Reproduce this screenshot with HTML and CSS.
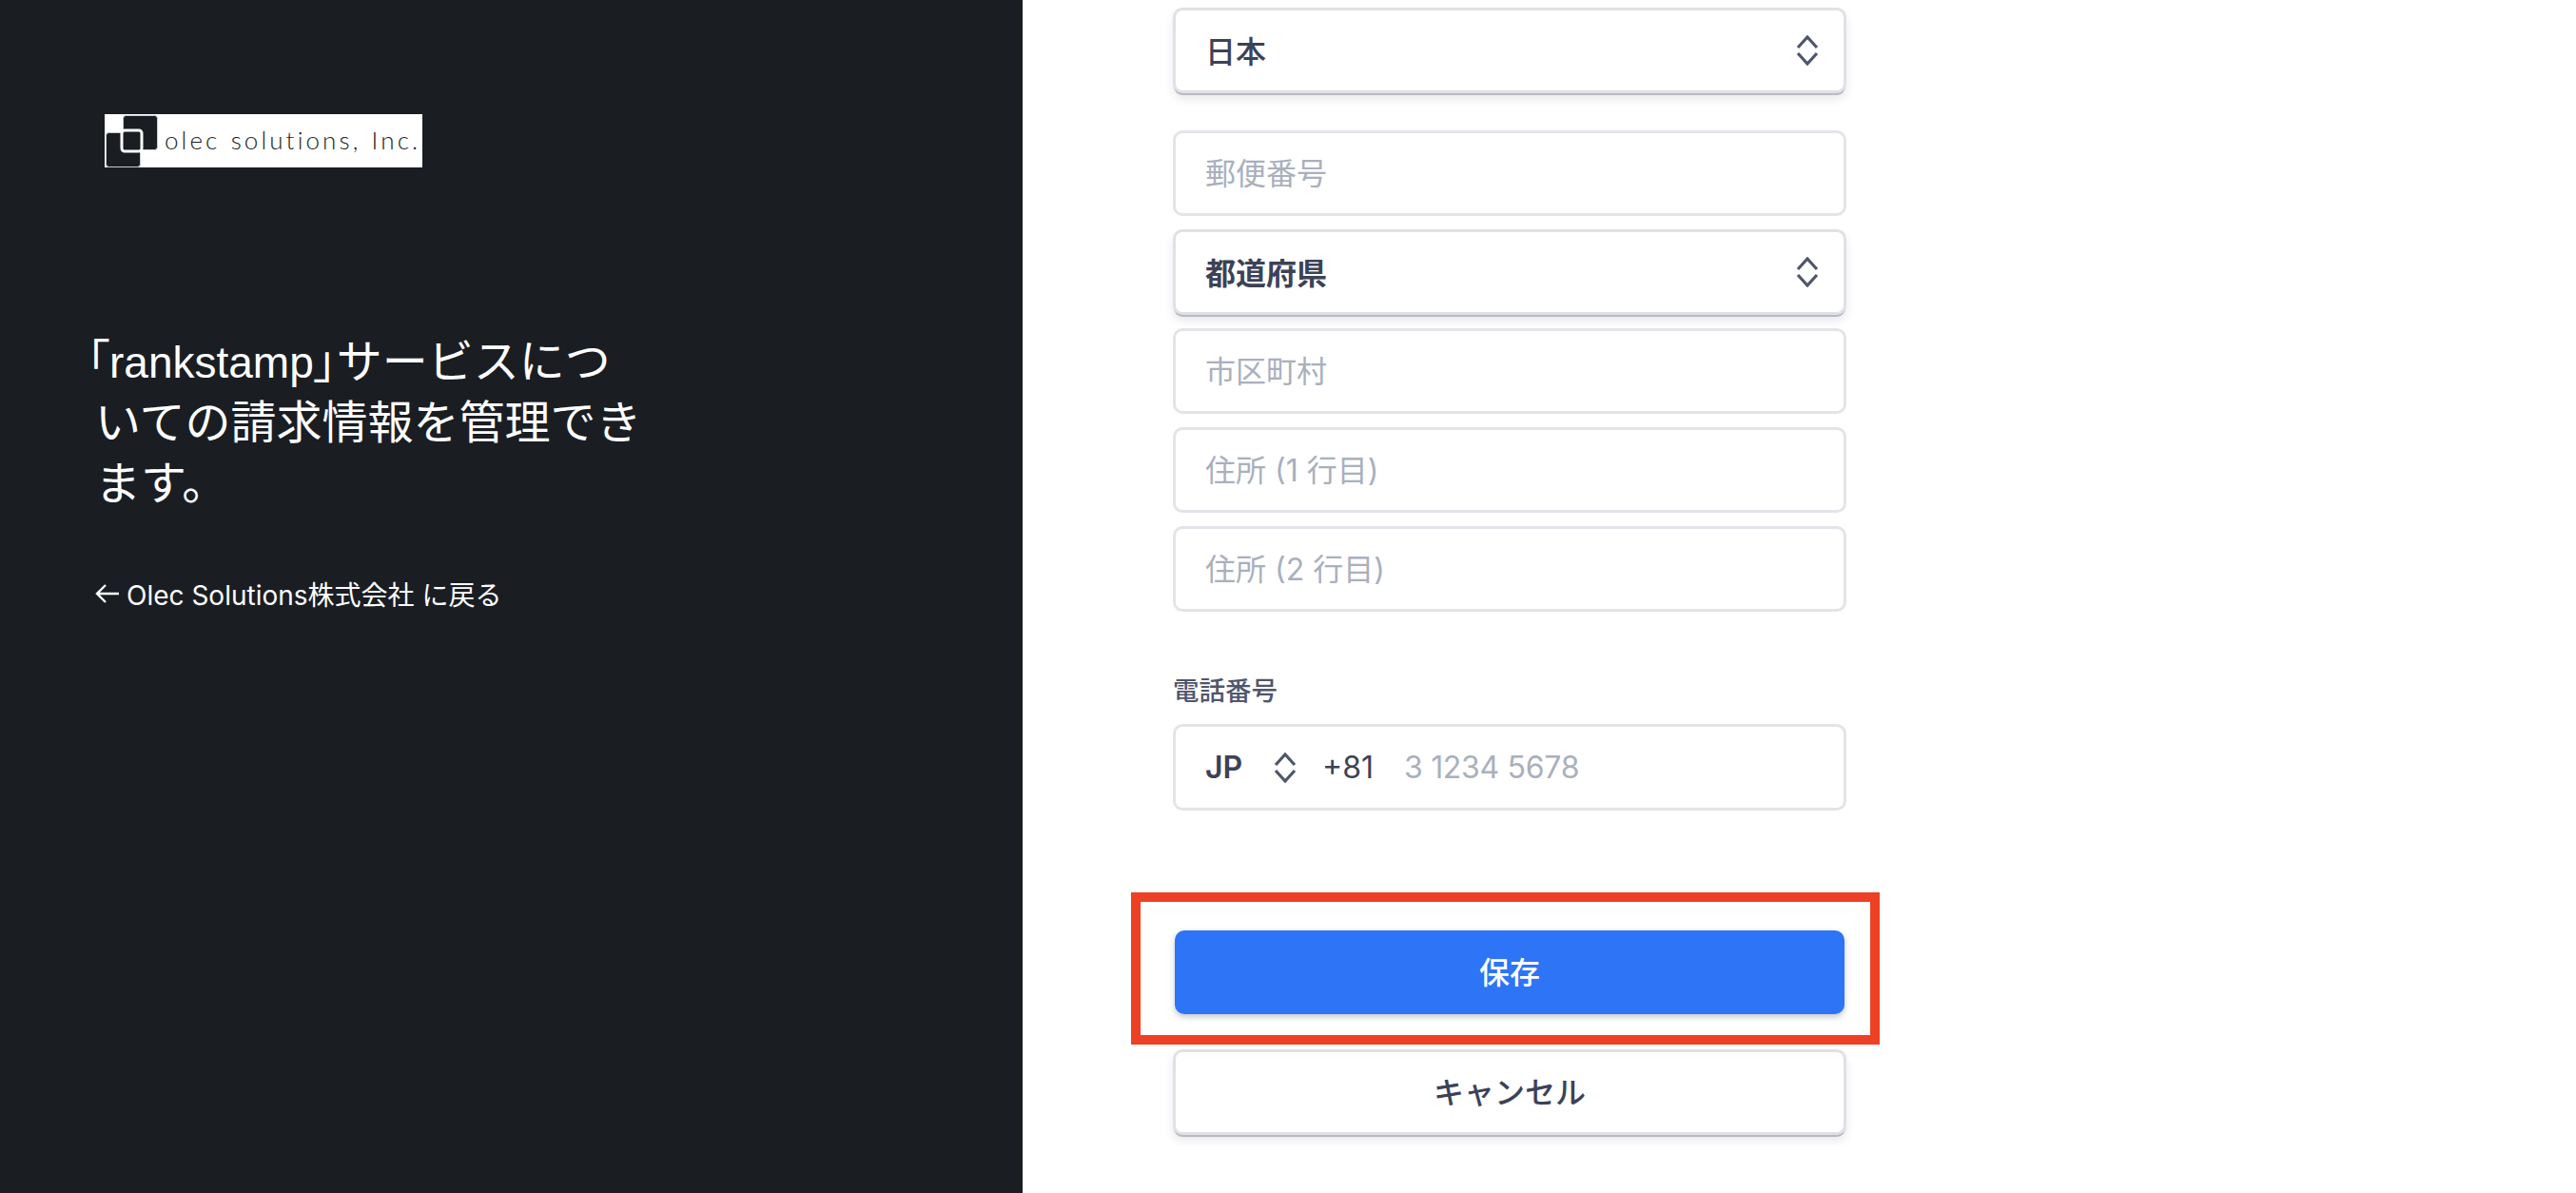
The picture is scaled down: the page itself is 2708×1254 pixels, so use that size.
FILE: index.html
```html
<!DOCTYPE html>
<html lang="ja">
<head>
	<meta charset="utf-8">
	<title>rankstamp</title>
	<link rel="stylesheet" href="styles.css">
</head>
<body>
<div class="page">
	<div class="side">
		<div class="logo">
			<svg class="logo-mark" width="58" height="56" viewBox="0 0 58 56">
				<rect x="19.5" y="1.5" width="36" height="36" rx="3" fill="#1a1e23" stroke="#c9cbce"/>
				<rect x="1.5" y="19.5" width="36" height="36" rx="3" fill="#1a1e23" stroke="#c9cbce"/>
				<rect x="18" y="17" width="21" height="22" rx="3" fill="#1a1e23" stroke="#fff" stroke-width="3"/>
			</svg>
			<span class="logo-text">olec solutions, Inc.</span>
		</div>
		<h1><span class="bracket">「</span><span class="name">rankstamp</span><span class="bracket">」</span>サービスについての請求情報を管理できます。</h1>
		<a class="back" href="#">
			<svg width="26" height="24" viewBox="0 0 26 24" fill="none" stroke="#fff" stroke-width="2.4"><path d="M25 12H2M11 3l-9 9 9 9"/></svg>
			<span>Olec Solutions株式会社 に戻る</span>
		</a>
	</div>

	<form class="main" action="#">
		<div class="field select">
			<span>日本</span>
			<svg class="updown" width="24" height="32" viewBox="0 0 24 32"><path d="M2 13L12 2l10 11M2 19l10 11 10-11"/></svg>
		</div>

		<div class="stack">
			<input class="field" type="text" placeholder="郵便番号">
			<div class="field select bold">
				<span>都道府県</span>
				<svg class="updown" width="24" height="32" viewBox="0 0 24 32"><path d="M2 13L12 2l10 11M2 19l10 11 10-11"/></svg>
			</div>
			<input class="field" type="text" placeholder="市区町村">
			<input class="field" type="text" placeholder="住所 (1 行目)">
			<input class="field" type="text" placeholder="住所 (2 行目)">
		</div>

		<label class="label">電話番号</label>
		<div class="field phone">
			<span class="country">JP</span>
			<svg class="updown" width="24" height="32" viewBox="0 0 24 32"><path d="M2 13L12 2l10 11M2 19l10 11 10-11"/></svg>
			<span class="code">+81</span>
			<input type="text" placeholder="3 1234 5678">
		</div>

		<div class="save-row">
			<button class="btn primary" type="button">保存</button>
			<div class="annotation"></div>
		</div>
		<button class="btn cancel" type="button">キャンセル</button>
	</form>
</div>
</body>
</html>
```

FILE: styles.css
```css
* {box-sizing: border-box;}
html, body {margin: 0; height: 100%; overflow: hidden;}
body {background: #fff; color: #3c4257; font-family: Inter, "Noto Sans CJK JP", sans-serif; font-size: 32px;}
.page {display: flex; height: 1254px;}

.side {width: 1075px; background: #1a1e23; color: #fff; padding: 120px 0 0 100px;}
.logo {display: flex; width: 334px; height: 56px; margin-left: 10px; background: #fff; overflow: hidden; align-items: center;}
.logo-mark {flex: none;}
.logo-text {margin: 0 0 3px 5px; font-family: Lato, sans-serif; font-weight: 300; font-size: 26px; letter-spacing: 3.1px; word-spacing: 1px; color: #1a1e23; white-space: nowrap;}
h1 {width: 580px; margin: 173px 0 0; font-family: "Liberation Sans", "Noto Sans CJK JP", sans-serif; font-size: 48px; line-height: 64px; font-weight: 400; text-indent: -9px;}
.bracket {font-feature-settings: "palt";}
.name {font-size: 46px;}
.back {display: flex; align-items: center; gap: 7px; margin-top: 63px; color: #fff; text-decoration: none; font-size: 28px;}

.main {width: 708px; margin-left: 158px; padding-top: 8px; display: flex; flex-direction: column;}
.field {display: flex; align-items: center; width: 100%; height: 90px; padding: 0 31px; background: #fff; border: 3px solid #e3e4e9; border-radius: 10px; color: #3c4257; font: inherit; outline: none;}
input::placeholder {color: #a9b0bd; opacity: 1;}
.select {justify-content: space-between; padding-right: 26px; padding-bottom: 2px; border-color: #e0e1e6; box-shadow: 0 3px 0 -1px #b9bac2, 0 6px 10px rgba(60, 66, 87, .12);}
.select span {font-weight: 500;}
.select .updown {margin-top: 2px;}
.select.bold span {font-weight: 700;}
.stack {display: flex; flex-direction: column; gap: 14px; margin-top: 39px;}
.updown {flex: none; fill: none; stroke: #4f566b; stroke-width: 3.2;}

.label {margin-top: 65px; font-size: 27.5px; line-height: 36px; font-weight: 500; color: #4f566b;}
.phone {margin-top: 17px; height: 91px;}
.country {font-weight: 600; width: 72px;}
.code {margin-left: 27px; margin-right: 32px; flex: none;}
.phone input {flex: 1; min-width: 0; border: 0; padding: 0; font: inherit; letter-spacing: -.3px; outline: none;}

.save-row {position: relative; margin-top: 126px; padding: 0 2px;}
.btn {display: block; width: 100%; height: 88px; padding: 0 0 4px; border-radius: 10px; font: inherit; cursor: pointer;}
.primary {border: 0; background: #2e74f6; color: #fff; font-weight: 500; box-shadow: 0 3px 6px rgba(60, 66, 87, .3);}
.annotation {position: absolute; top: -40px; right: -35px; bottom: -32px; left: -44px; border: 10px solid #ee4025; pointer-events: none;}
.cancel {height: 90px; margin-top: 37px; background: #fff; color: #3c4257; font-weight: 500; border: 3px solid #e0e1e6; box-shadow: 0 3px 0 -1px #b9bac2, 0 6px 10px rgba(60, 66, 87, .12);}
```
